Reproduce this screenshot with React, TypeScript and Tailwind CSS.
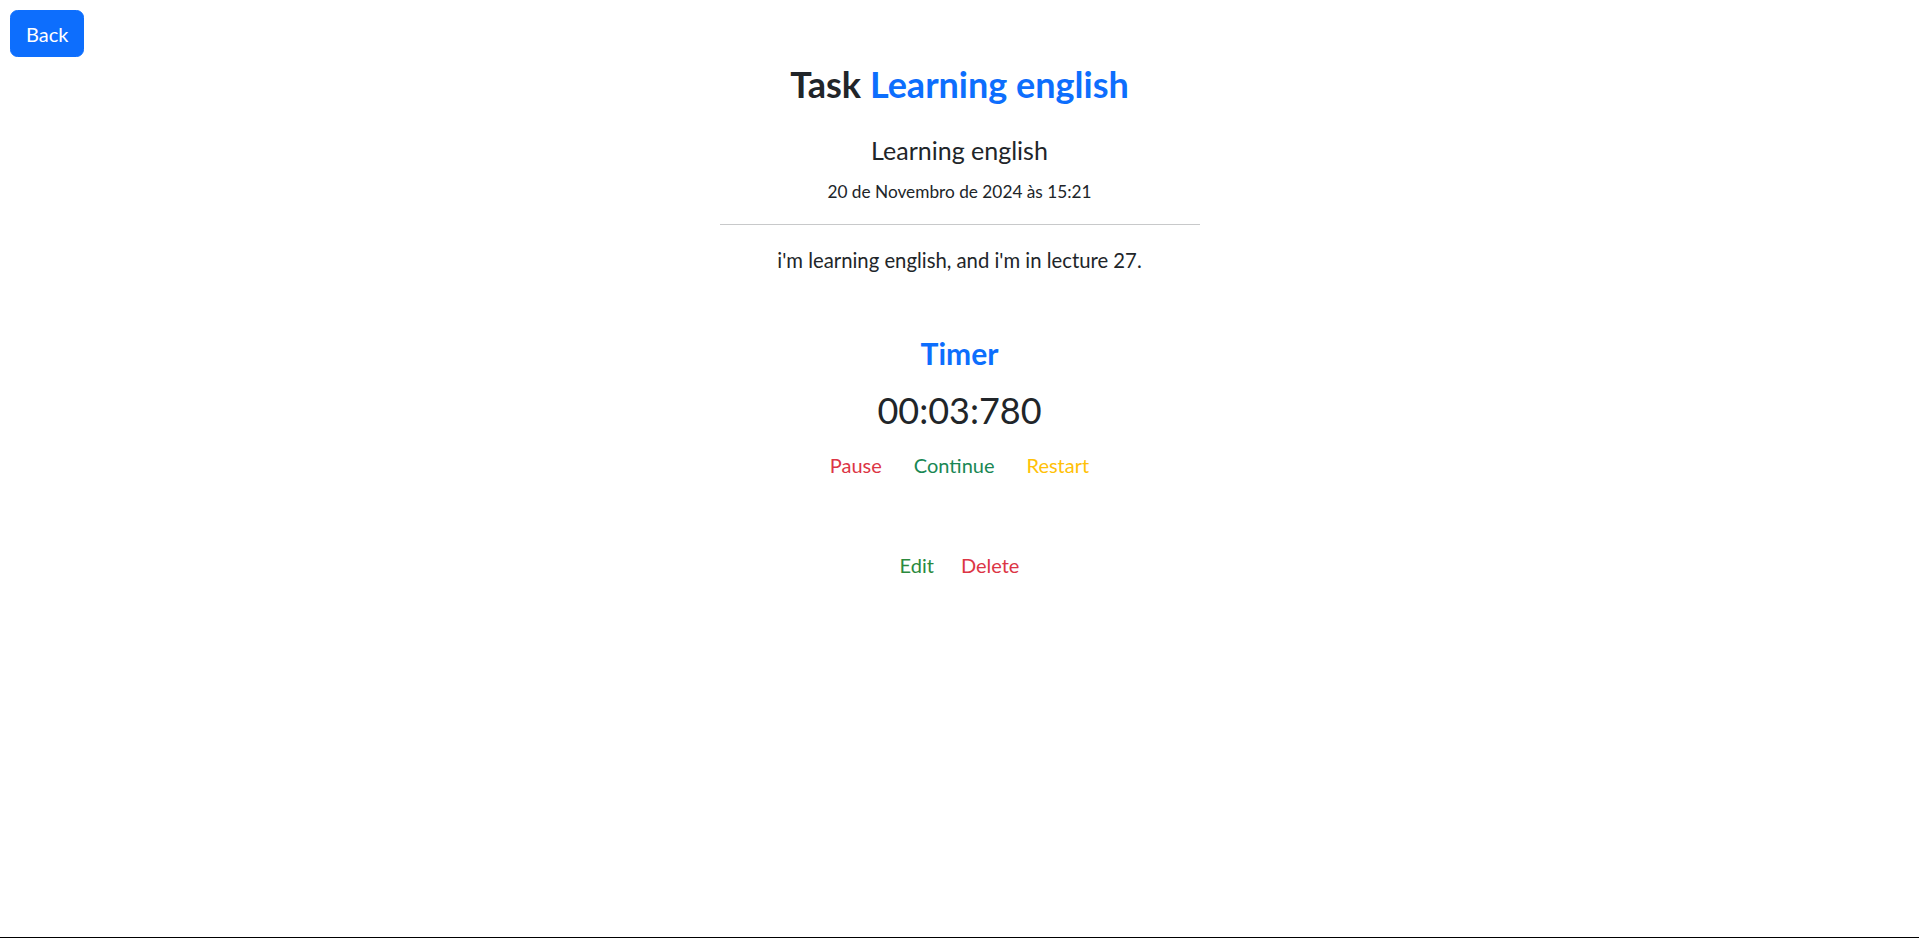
export default function App() {
  return (
    <div
      className="h-[938px] border-b border-black bg-white text-[#212529]"
      style={{ fontFamily: 'Lato, "Noto Sans", sans-serif' }}
    >
      <div className="pl-[10px] pt-[10px]">
        <button className="rounded-[7.5px] border border-[#0d6efd] bg-[#0d6efd] px-[15px] py-[7.5px] text-[20px] leading-[30px] text-white">
          Back
        </button>
      </div>

      <div className="flex flex-col items-center text-center">
        <h2 className="mt-[5.5px] text-[36px] font-bold leading-[43.2px]">
          Task <span className="text-[#0d6efd]">Learning english</span>
        </h2>
        <h5 className="mt-[29.6px] text-[25px] leading-[30px]">Learning english</h5>
        <small className="mt-[15.4px] text-[17.25px] leading-[21px]">20 de Novembro de 2024 às 15:21</small>
        <hr className="mt-[22.3px] w-[480px] border-[#c8c9ca]" />
        <p className="mt-[23.3px] text-[20.3px] leading-[24px]">i'm learning english, and i'm in lecture 27.</p>

        <h4 className="mt-[63.1px] text-[30px] font-bold leading-[36px] text-[#0d6efd]">Timer</h4>
        <div className="mt-[18.1px] text-[36px] leading-[43.2px]">00:03:780</div>
        <div className="mt-[9.1px] flex">
          <button className="border border-transparent px-[15px] py-[7.5px] text-[20px] leading-[30px] text-[#dc3545]">
            Pause
          </button>
          <button className="border border-transparent px-[15px] py-[7.5px] text-[20px] leading-[30px] text-[#198754]">
            Continue
          </button>
          <button className="border border-transparent px-[15px] py-[7.5px] text-[20px] leading-[30px] text-[#ffc107]">
            Restart
          </button>
        </div>

        <div className="mt-[61.5px] flex gap-[27px] text-[20px] leading-[30px]">
          <button className="text-[#2b8a3e]">Edit</button>
          <button className="text-[#dc3545]">Delete</button>
        </div>
      </div>
    </div>
  );
}
